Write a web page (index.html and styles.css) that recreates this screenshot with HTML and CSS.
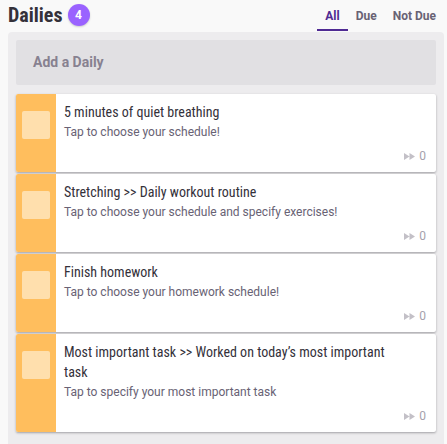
FILE: index.html
```html
<!DOCTYPE html>
<html>
<head>
<meta charset="utf-8">
<link rel="stylesheet" href="styles.css">
</head>
<body>
<div class="column">
  <div class="col-header">
    <div class="title-wrap">
      <h2 class="col-title">Dailies</h2>
      <span class="badge">4</span>
    </div>
    <div class="tabs">
      <span class="tab active">All</span>
      <span class="tab">Due</span>
      <span class="tab">Not Due</span>
    </div>
  </div>
  <div class="panel">
    <div class="add-box">Add a Daily</div>
    <div class="tasks">
      <div class="task">
        <div class="stripe"><div class="check"></div></div>
        <div class="content">
          <div class="task-title">5 minutes of quiet breathing</div>
          <div class="task-notes">Tap to choose your schedule!</div>
          <div class="task-foot"><svg class="streak" width="11" height="7" viewBox="0 0 11 7"><path d="M0 0L5.5 3.5L0 7Z M5.5 0L11 3.5L5.5 7Z" fill="#c3c0c7"/></svg><span class="count">0</span></div>
        </div>
      </div>
      <div class="task">
        <div class="stripe"><div class="check"></div></div>
        <div class="content">
          <div class="task-title">Stretching &gt;&gt; Daily workout routine</div>
          <div class="task-notes">Tap to choose your schedule and specify exercises!</div>
          <div class="task-foot"><svg class="streak" width="11" height="7" viewBox="0 0 11 7"><path d="M0 0L5.5 3.5L0 7Z M5.5 0L11 3.5L5.5 7Z" fill="#c3c0c7"/></svg><span class="count">0</span></div>
        </div>
      </div>
      <div class="task">
        <div class="stripe"><div class="check"></div></div>
        <div class="content">
          <div class="task-title">Finish homework</div>
          <div class="task-notes">Tap to choose your homework schedule!</div>
          <div class="task-foot"><svg class="streak" width="11" height="7" viewBox="0 0 11 7"><path d="M0 0L5.5 3.5L0 7Z M5.5 0L11 3.5L5.5 7Z" fill="#c3c0c7"/></svg><span class="count">0</span></div>
        </div>
      </div>
      <div class="task">
        <div class="stripe"><div class="check"></div></div>
        <div class="content">
          <div class="task-title">Most important task &gt;&gt; Worked on today’s most important task</div>
          <div class="task-notes">Tap to specify your most important task</div>
          <div class="task-foot"><svg class="streak" width="11" height="7" viewBox="0 0 11 7"><path d="M0 0L5.5 3.5L0 7Z M5.5 0L11 3.5L5.5 7Z" fill="#c3c0c7"/></svg><span class="count">0</span></div>
        </div>
      </div>
    </div>
  </div>
</div>
</body>
</html>
```

FILE: styles.css
```css
html, body {
  margin: 0;
  padding: 0;
  background: #f9f9f9;
}
body {
  font-family: Roboto, "Liberation Sans", sans-serif;
  color: #34313a;
}
.column {
  width: 436px;
  margin-left: 8px;
}
.col-header {
  height: 32px;
  display: flex;
  justify-content: space-between;
  align-items: stretch;
}
.title-wrap {
  display: flex;
  align-items: center;
  gap: 5px;
  padding-bottom: 2px;
}
.col-title {
  margin: 0;
  font-family: "Roboto Condensed", Roboto, "Liberation Sans", sans-serif;
  font-stretch: condensed;
  font-size: 20px;
  font-weight: 700;
  line-height: 24px;
  color: #34313a;
}
.badge {
  width: 22px;
  height: 22px;
  border-radius: 50%;
  background: #9a62ff;
  color: #fff;
  font-size: 12px;
  font-weight: 700;
  display: flex;
  align-items: center;
  justify-content: center;
  box-shadow: 0 1px 2px rgba(26,24,29,0.2);
}
.tabs {
  display: flex;
  margin-right: 8px;
}
.tab {
  font-size: 12px;
  font-weight: 700;
  color: #686274;
  padding: 9px 8px 0;
  height: 20px;
  line-height: 14px;
}
.tab:last-child { padding-right: 0; }
.tab.active {
  color: #4f2a93;
  border-bottom: 2px solid #4f2a93;
  height: 20px;
}
.panel {
  background: #edecee;
  border-radius: 4px;
  padding: 8px 8px 20px;
  min-height: 400px;
}
.add-box {
  background: #e1e0e3;
  border-radius: 2px;
  height: 45px;
  line-height: 45px;
  padding-left: 17px;
  font-size: 14px;
  font-weight: 700;
  color: #878190;
  margin-bottom: 9px;
}
.tasks {
  display: flex;
  flex-direction: column;
  gap: 2px;
}
.task {
  display: flex;
  background: #fff;
  border-radius: 2px;
  box-shadow: 0 1px 3px rgba(26,24,29,0.12), 0 1px 2px rgba(26,24,29,0.24);
  overflow: hidden;
}
.stripe {
  width: 40px;
  flex: none;
  background: #ffbe5d;
  display: flex;
  justify-content: center;
  align-items: flex-start;
}
.check {
  width: 28px;
  height: 28px;
  margin-top: 17px;
  border-radius: 2px;
  background: #ffdfad;
}
.content {
  flex: 1;
  padding: 8px 10px 8px 8px;
}
.task-title {
  font-family: "Roboto Condensed", Roboto, "Liberation Sans", sans-serif;
  font-stretch: condensed;
  font-size: 14px;
  line-height: 20px;
  color: #34313a;
  padding-right: 40px;
}
.task-notes {
  font-size: 12px;
  line-height: 16px;
  padding-top: 2px;
  color: #686274;
}
.task-foot {
  margin-top: 8px;
  height: 16px;
  display: flex;
  justify-content: flex-end;
  align-items: center;
  gap: 4px;
}
.count {
  font-size: 12px;
  line-height: 16px;
  color: #a5a1ac;
}
```
